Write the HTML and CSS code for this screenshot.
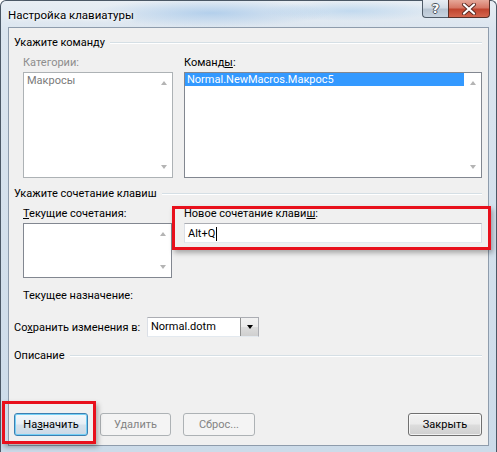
FILE: index.html
```html
<!DOCTYPE html>
<html lang="ru">
<head>
  <meta charset="UTF-8">
  <title>Настройка клавиатуры</title>
  <link rel="stylesheet" href="styles.css">
</head>
<body>

  <div class="window">

    <div class="titlebar">
      <span class="title">Настройка клавиатуры</span>
      <div class="caption-buttons">
        <span class="cap-btn help">?</span>
        <span class="cap-btn close">
          <svg width="16" height="12" viewBox="0 0 16 12">
            <path d="M3 1.5 L13 10.5 M13 1.5 L3 10.5" stroke="#5a2a22" stroke-width="4" stroke-linecap="round"/>
            <path d="M3 1.5 L13 10.5 M13 1.5 L3 10.5" stroke="#fff" stroke-width="2.2" stroke-linecap="round"/>
          </svg>
        </span>
      </div>
    </div>

    <div class="client">

      <div class="group-title"><span>Укажите команду</span></div>

      <div class="cmd-row">
        <div class="col col-narrow">
          <div class="label disabled">Категории:</div>
          <div class="listbox listbox-cmd is-disabled">
            <div class="items">
              <div class="item">Макросы</div>
            </div>
            <div class="scroll"><i class="arr-up"></i><i class="arr-down"></i></div>
          </div>
        </div>
        <div class="col col-wide">
          <div class="label">Команд<u>ы</u>:</div>
          <div class="listbox listbox-cmd">
            <div class="items">
              <div class="item selected">Normal.NewMacros.Макрос5</div>
            </div>
            <div class="scroll"><i class="arr-up"></i><i class="arr-down"></i></div>
          </div>
        </div>
      </div>

      <div class="group-title second"><span>Укажите сочетание клавиш</span></div>

      <div class="keys-row">
        <div class="col col-narrow">
          <div class="label"><u>Т</u>екущие сочетания:</div>
          <div class="listbox listbox-keys">
            <div class="items"></div>
            <div class="scroll"><i class="arr-up"></i><i class="arr-down"></i></div>
          </div>
        </div>
        <div class="col col-wide new-key">
          <div class="label">Новое сочетание клави<u>ш</u>:</div>
          <div class="textbox">Alt+Q<span class="caret"></span></div>
          <div class="mark mark-keys"></div>
        </div>
      </div>

      <div class="label assigned">Текущее назначение:</div>

      <div class="save-row">
        <span class="save-label">Со<u>х</u>ранить изменения в:</span>
        <div class="combo">
          <span class="combo-text">Normal.dotm</span>
          <span class="combo-btn"><i class="arr-combo"></i></span>
        </div>
      </div>

      <div class="group-title third"><span>Описание</span></div>

      <div class="buttons">
        <div class="btn-wrap">
          <button class="btn default" style="width:74px">На<u>з</u>начить</button>
          <div class="mark mark-assign"></div>
        </div>
        <button class="btn" disabled style="width:71px">Удалить</button>
        <button class="btn" disabled style="width:72px">Сброс...</button>
        <button class="btn close-btn" style="width:74px">Закрыть</button>
      </div>

    </div>
  </div>

</body>
</html>
```

FILE: styles.css
```css
body {
  margin: 0;
  width: 497px;
  height: 452px;
  overflow: hidden;
  font-family: Roboto, "Noto Sans", sans-serif;
  font-size: 11px;
  color: #000;
  background: #fff;
}

/* окно в стиле Aero */
.window {
  box-sizing: border-box;
  height: 452px;
  border: 1px solid #4b5866;
  border-bottom: none;
  border-radius: 6px 6px 0 0;
  display: flex;
  flex-direction: column;
  background:
    radial-gradient(ellipse 120px 14px at 210px 12px, rgba(140, 185, 230, 0.55), transparent),
    radial-gradient(ellipse 90px 10px at 350px 10px, rgba(160, 200, 235, 0.5), transparent),
    linear-gradient(to bottom, #e8eef4 0px, #dbe5ef 30px, #ccdbe9 100%);
}

.titlebar {
  height: 26px;
  display: flex;
  align-items: flex-start;
  justify-content: space-between;
  flex-shrink: 0;
}

.title {
  padding: 6px 0 0 7px;
  font-size: 11.5px;
  line-height: 16px;
  color: #000;
  text-shadow: 0 0 6px #fff, 0 0 3px #fff;
}

.caption-buttons {
  display: flex;
  margin: -1px 6px 0 0;
}

.cap-btn {
  box-sizing: border-box;
  height: 18px;
  display: flex;
  align-items: center;
  justify-content: center;
  border: 1px solid #4f5b68;
  border-top: none;
}

.help {
  width: 26px;
  border-right: none;
  border-radius: 0 0 0 4px;
  background: linear-gradient(to bottom, #e9eef4 0%, #d3dce6 45%, #b7c4d2 55%, #c8d4e0 100%);
  font-family: "DejaVu Sans", sans-serif;
  font-weight: bold;
  font-size: 13px;
  color: #fff;
  text-shadow: 1px 0 0 #4c5560, -1px 0 0 #4c5560, 0 1px 0 #4c5560, 0 -1px 0 #4c5560;
}

.close {
  width: 42px;
  border-radius: 0 0 4px 0;
  border-color: #5a3028;
  background: linear-gradient(to bottom, #e6a899 0%, #d67866 45%, #c0452f 55%, #d4664e 100%);
}

/* клиентская область */
.client {
  flex: 1;
  margin: 0 7px 6px 7px;
  border: 1px solid #8e9cac;
  background: #f0f0f0;
  padding: 7px 6px 9px 5px;
  display: flex;
  flex-direction: column;
}

.group-title {
  display: flex;
  align-items: center;
  line-height: 15px;
  height: 15px;
}

.group-title::after {
  content: "";
  flex: 1;
  margin-left: 5px;
  border-top: 1px solid #d5dfe5;
  border-bottom: 1px solid #fff;
}

.group-title.second {
  margin-top: 8px;
}

.group-title.third {
  margin-top: 11px;
}

.label {
  line-height: 15px;
  margin-bottom: 2px;
}

.label.disabled {
  color: #8d8d8d;
}

.cmd-row,
.keys-row {
  display: flex;
  gap: 11px;
  padding-left: 9px;
  margin-top: 5px;
}

.col-narrow {
  width: 150px;
}

.col-wide {
  width: 298px;
}

.listbox {
  box-sizing: border-box;
  display: flex;
  background: #fff;
  border: 1px solid #828790;
}

.listbox.is-disabled {
  border-color: #adb2b5;
  color: #7a7a7a;
}

.listbox-cmd {
  height: 106px;
}

.listbox-keys {
  height: 55px;
  width: 149px;
}

.items {
  flex: 1;
}

.item {
  line-height: 13px;
  padding-left: 2px;
}

.is-disabled .item {
  padding-left: 3px;
  margin-top: 1px;
}

.item.selected {
  background: #3399ff;
  color: #fff;
}

.scroll {
  width: 17px;
  display: flex;
  flex-direction: column;
  justify-content: space-between;
  align-items: center;
  padding: 8px 0;
}

.arr-up,
.arr-down {
  width: 0;
  height: 0;
  border-left: 3.5px solid transparent;
  border-right: 3.5px solid transparent;
}

.arr-up {
  border-bottom: 4px solid #b4b4b4;
}

.arr-down {
  border-top: 4px solid #b4b4b4;
}

.new-key {
  position: relative;
}

.textbox {
  box-sizing: border-box;
  height: 20px;
  background: #fff;
  border: 1px solid #abadb3;
  border-left-color: #dbdfe6;
  border-right-color: #dbdfe6;
  border-bottom-color: #e3e9ef;
  padding: 1px 0 0 3px;
  display: flex;
  align-items: center;
}

.caret {
  display: inline-block;
  width: 0;
  height: 14px;
  border-left: 1px solid #000;
  margin-left: 1px;
}

/* красные рамки-выделения поверх диалога */
.mark {
  position: absolute;
  box-sizing: border-box;
  border: 3px solid #e8101c;
  box-shadow: 2px 3px 5px rgba(0, 0, 0, 0.3);
  pointer-events: none;
}

.mark-keys {
  left: -12px;
  top: 0;
  width: 319px;
  height: 44px;
}

.mark-assign {
  left: -12px;
  top: -12px;
  width: 94px;
  height: 43px;
}

.assigned {
  margin: 10px 0 0 9px;
}

.save-row {
  display: flex;
  align-items: center;
  margin-top: 14px;
  height: 20px;
}

.save-label {
  width: 133px;
  white-space: nowrap;
}

.combo {
  box-sizing: border-box;
  width: 112px;
  height: 20px;
  display: flex;
  background: #fff;
  border: 1px solid #abadb3;
  border-left-color: #dbdfe6;
  border-bottom-color: #e3e9ef;
}

.combo-text {
  flex: 1;
  padding-left: 3px;
  line-height: 18px;
}

.combo-btn {
  width: 17px;
  display: flex;
  align-items: center;
  justify-content: center;
  border-left: 1px solid #8e8f8f;
  background: linear-gradient(to bottom, #f2f2f2 0%, #ebebeb 50%, #dddddd 51%, #cfcfcf 100%);
}

.arr-combo {
  width: 0;
  height: 0;
  border-left: 3.5px solid transparent;
  border-right: 3.5px solid transparent;
  border-top: 4px solid #000;
}

.buttons {
  margin-top: auto;
  display: flex;
  gap: 12px;
}

.btn-wrap {
  position: relative;
  display: flex;
}

.btn {
  box-sizing: border-box;
  height: 23px;
  padding: 0;
  font-family: inherit;
  font-size: 11px;
  color: #000;
  border: 1px solid #707070;
  border-radius: 3px;
  background: linear-gradient(to bottom, #f2f2f2 0%, #ebebeb 48%, #dddddd 52%, #cfcfcf 100%);
  box-shadow: inset 0 0 0 1px rgba(255, 255, 255, 0.7);
}

.btn.default {
  border-color: #3c7fb1;
  box-shadow: inset 0 0 0 1px #74d0f6;
  background: linear-gradient(to bottom, #f4f8fb 0%, #e6eef5 48%, #d6e2ec 52%, #cbd9e6 100%);
}

.btn:disabled {
  color: #838383;
  border-color: #adb2b5;
  background: #f4f4f4;
  box-shadow: none;
}

.close-btn {
  margin-left: auto;
}
```
